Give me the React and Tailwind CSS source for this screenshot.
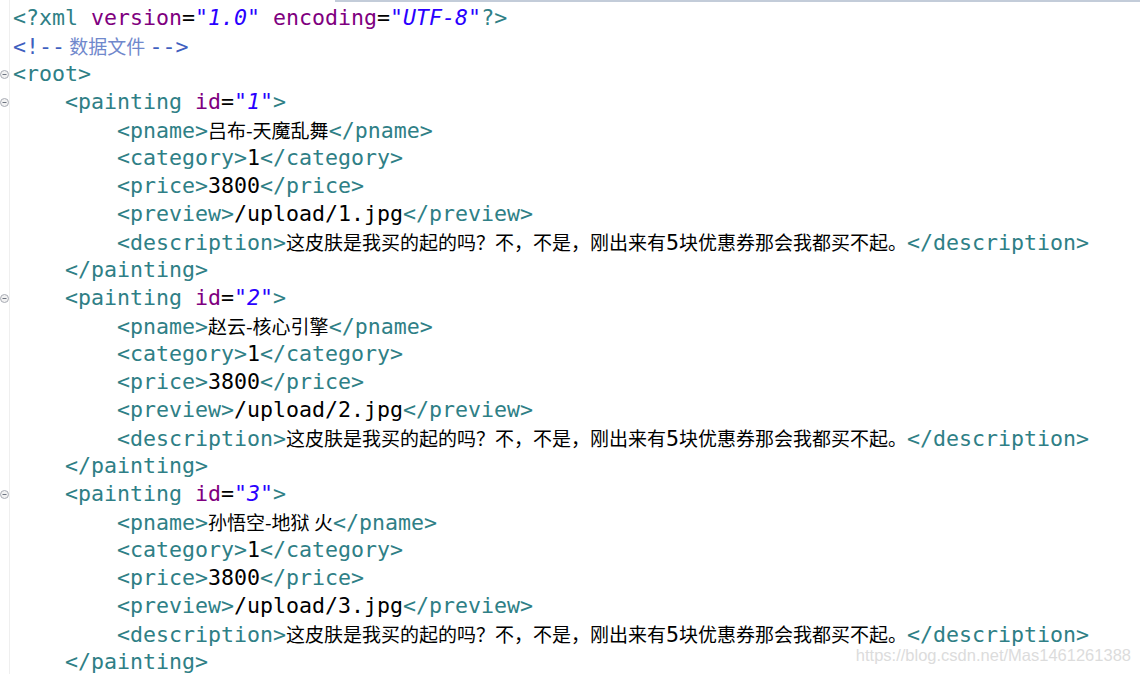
import React from 'react';

const mono = { fontFamily: '"DejaVu Sans Mono", "Liberation Mono", monospace' };

const T = ({ children }) => <span className="text-[#2f7f86]">{children}</span>;
const A = ({ children }) => <span className="text-[#7f007f]">{children}</span>;
const V = ({ children }) => <span className="text-[#2a00ff] italic">{children}</span>;
const Cjk = ({ children, className = '' }) => (
    <span className={`font-['Noto_Sans_CJK_SC',sans-serif] text-[19px] ${className}`}>{children}</span>
);

const desc = (
    <>
        <Cjk>这皮肤是我买的起的吗？不，不是，刚出来有</Cjk>
        5
        <Cjk>块优惠券那会我都买不起。</Cjk>
    </>
);

const painting = (id, name, n) => [
    { fold: true, c: <>    <T>&lt;painting </T><A>id</A>=<V>"{id}"</V><T>&gt;</T></> },
    { c: <>        <T>&lt;pname&gt;</T><Cjk>{name}</Cjk><T>&lt;/pname&gt;</T></> },
    { c: <>        <T>&lt;category&gt;</T>1<T>&lt;/category&gt;</T></> },
    { c: <>        <T>&lt;price&gt;</T>3800<T>&lt;/price&gt;</T></> },
    { c: <>        <T>&lt;preview&gt;</T>/upload/{n}.jpg<T>&lt;/preview&gt;</T></> },
    { c: <>        <T>&lt;description&gt;</T>{desc}<T>&lt;/description&gt;</T></> },
    { c: <>    <T>&lt;/painting&gt;</T></> },
];

const lines = [
    { c: <><T>&lt;?xml </T><A>version</A>=<V>"1.0"</V> <A>encoding</A>=<V>"UTF-8"</V><T>?&gt;</T></> },
    { c: <span className="text-[#3f5fbf]">&lt;!--<Cjk className="text-[18px] text-[#7088cc]"> 数据文件 </Cjk>--&gt;</span> },
    { fold: true, c: <T>&lt;root&gt;</T> },
    ...painting('1', '吕布-天魔乱舞', 1),
    ...painting('2', '赵云-核心引擎', 2),
    ...painting('3', '孙悟空-地狱 火', 3),
];

const FoldMark = () => (
    <svg width="9" height="9" viewBox="0 0 9 9" className="block">
        <circle cx="4.5" cy="4.5" r="4" fill="#f2f2f2" stroke="#a8acb4" strokeWidth="1" />
        <line x1="2.5" y1="4.5" x2="6.5" y2="4.5" stroke="#6d7380" strokeWidth="1" />
    </svg>
);

const App = () => {
    return (
        <div className="relative w-[1140px] h-[674px] overflow-hidden bg-white">
            <div className="flex justify-end">
                <div className="w-[805px] h-[2px] bg-[#c3ccd9]" />
            </div>
            <div className="flex h-full -mt-[2px]">
                <div className="w-[10px] border-r border-[#efefef] pt-[4px]">
                    {lines.map((l, i) => (
                        <div key={i} className="h-[28px] flex items-center">
                            {l.fold && <FoldMark />}
                        </div>
                    ))}
                </div>
                <div className="pl-[3px] pt-[4px] text-black text-[21.6px]" style={mono}>
                    {lines.map((l, i) => (
                        <div key={i} className="h-[28px] leading-[28px] whitespace-pre">
                            {l.c}
                        </div>
                    ))}
                </div>
            </div>
            <div className="absolute right-[9px] bottom-[6px] text-[16.5px] text-[#dcdcdc] font-['Liberation_Sans',sans-serif]">
                https://blog.csdn.net/Mas1461261388
            </div>
        </div>
    );
};

export default App;
